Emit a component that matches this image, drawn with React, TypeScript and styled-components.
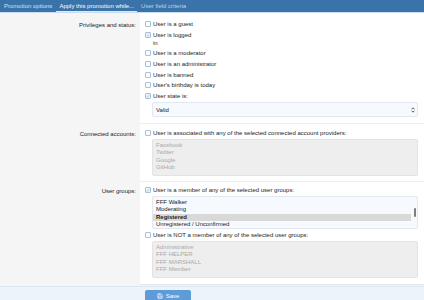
import styled, { createGlobalStyle } from 'styled-components';
import { Save } from 'lucide-react';

const GlobalStyle = createGlobalStyle`
  html, body {
    margin: 0;
    padding: 0;
    background: #f5f5f5;
    font-family: "Liberation Sans", Arial, sans-serif;
    font-size: 6px;
    color: #1c1c1c;
  }
`;

const privileges: { text: React.ReactNode; checked?: boolean }[] = [
  { text: 'User is a guest' },
  { text: <>User is logged<br />in</>, checked: true },
  { text: 'User is a moderator' },
  { text: 'User is an administrator' },
  { text: 'User is banned' },
  { text: "User's birthday is today" },
  { text: 'User state is:', checked: true },
];

const providers = ['Facebook', 'Twitter', 'Google', 'GitHub'];
const memberGroups = ['FFF Walker', 'Moderating', 'Registered', 'Unregistered / Unconfirmed'];
const notMemberGroups = ['Administrative', 'FFF HELPER', 'FFF MARSHALL', 'FFF Member'];

export default function App() {
  return (
    <Page>
      <GlobalStyle />
      <Tabs>
        <Tab>Promotion options</Tab>
        <Tab active>Apply this promotion while...</Tab>
        <Tab dim>User field criteria</Tab>
      </Tabs>

      <FormRow>
        <Label top={8}>Privileges and status:</Label>
        <Field top={7} bottom={6}>
          <CheckList>
            {privileges.map((p, i) => (
              <CheckItem key={i}>
                <Box checked={p.checked}>{p.checked ? '✓' : ''}</Box>
                <span>{p.text}</span>
              </CheckItem>
            ))}
          </CheckList>
          <Select>
            <span>Valid</span>
            <svg width="4" height="6" viewBox="0 0 4 6">
              <path d="M0.5 2.3 L2 0.8 L3.5 2.3 M0.5 3.7 L2 5.2 L3.5 3.7" fill="none" stroke="#333" strokeWidth="0.8" />
            </svg>
          </Select>
        </Field>
      </FormRow>

      <FormRow>
        <Label top={6}>Connected accounts:</Label>
        <Field top={5} bottom={5}>
          <CheckItem>
            <Box />
            <span>User is associated with any of the selected connected account providers:</span>
          </CheckItem>
          <ListBox disabled>
            {providers.map((p) => (
              <ListItem key={p}>{p}</ListItem>
            ))}
          </ListBox>
        </Field>
      </FormRow>

      <FormRow>
        <Label top={5}>User groups:</Label>
        <Field top={4} bottom={6} last>
          <CheckItem>
            <Box checked>✓</Box>
            <span>User is a member of any of the selected user groups:</span>
          </CheckItem>
          <ListBox>
            {memberGroups.map((g) => (
              <ListItem key={g} selected={g === 'Registered'}>
                {g}
              </ListItem>
            ))}
            <Scrollbar />
          </ListBox>
          <CheckItem>
            <Box />
            <span>User is NOT a member of any of the selected user groups:</span>
          </CheckItem>
          <ListBox disabled>
            {notMemberGroups.map((g) => (
              <ListItem key={g}>{g}</ListItem>
            ))}
          </ListBox>
        </Field>
      </FormRow>

      <Footer>
        <SaveButton>
          <Save size={6} strokeWidth={2.5} />
          Save
        </SaveButton>
      </Footer>
    </Page>
  );
}

const Page = styled.div`
  width: 424px;
  height: 300px;
  overflow: hidden;
  background: #f5f5f5;
`;

const Tabs = styled.div`
  display: flex;
  height: 12px;
  background: #3a72aa;
  border-bottom: 1px solid #c9dbee;
  padding-left: 1px;
`;

const Tab = styled.div<{ active?: boolean; dim?: boolean }>`
  display: flex;
  align-items: center;
  padding: 0 3px;
  margin-right: 1px;
  color: ${(p) => (p.active ? '#ffffff' : p.dim ? '#bcd3ec' : '#d3e2f2')};
  box-shadow: ${(p) => (p.active ? 'inset 0 -1px 0 #dde9f5' : 'none')};
  white-space: nowrap;
  line-height: 12px;
`;

const FormRow = styled.div`
  display: grid;
  grid-template-columns: 140px 1fr;
`;

const Label = styled.div<{ top: number }>`
  text-align: right;
  padding: ${(p) => p.top}px 4px 0 0;
  line-height: 8px;
  background: #f5f5f5;
`;

const Field = styled.div<{ top: number; bottom: number; last?: boolean }>`
  display: flex;
  flex-direction: column;
  gap: 2px;
  background: #ffffff;
  padding: ${(p) => p.top}px 6px ${(p) => p.bottom}px 5px;
  border-bottom: 1px solid ${(p) => (p.last ? '#e2e6ea' : '#efefef')};
`;

const CheckList = styled.div`
  display: flex;
  flex-direction: column;
  gap: 2.7px;
`;

const CheckItem = styled.label`
  display: flex;
  align-items: flex-start;
  gap: 2px;
  line-height: 8px;
  white-space: nowrap;
`;

const Box = styled.span<{ checked?: boolean }>`
  box-sizing: border-box;
  flex: none;
  width: 6px;
  height: 6px;
  margin-top: 1px;
  border: 1px solid #a7bfd8;
  border-radius: 1px;
  background: ${(p) => (p.checked ? '#eef4fb' : '#fafcfe')};
  color: #8fb1d6;
  font-size: 5px;
  line-height: 4px;
  text-align: center;
`;

const Select = styled.div`
  box-sizing: border-box;
  display: flex;
  align-items: center;
  justify-content: space-between;
  height: 15px;
  margin-left: 7px;
  padding: 0 2px 0 3px;
  background: #f6f9fd;
  border: 1px solid #e1e8f0;
  border-radius: 2px;
`;

const ListBox = styled.div<{ disabled?: boolean }>`
  position: relative;
  box-sizing: border-box;
  height: ${(p) => (p.disabled ? 37 : 33)}px;
  margin-left: 7px;
  padding: 2px 6px 2px 0;
  overflow: hidden;
  background: ${(p) => (p.disabled ? '#eeeeee' : '#f6f9fd')};
  border: 1px solid ${(p) => (p.disabled ? '#e3e3e3' : '#e1e8f0')};
  border-radius: 2px;
  color: ${(p) => (p.disabled ? '#a9a9a9' : '#1c1c1c')};
`;

const ListItem = styled.div<{ selected?: boolean }>`
  padding-left: 3px;
  line-height: 7.2px;
  white-space: nowrap;
  background: ${(p) => (p.selected ? '#d9d9d9' : 'transparent')};
  font-weight: ${(p) => (p.selected ? 700 : 400)};
`;

const Scrollbar = styled.span`
  position: absolute;
  right: 1px;
  top: 11px;
  width: 2px;
  height: 9px;
  background: #7f7f7f;
  border-radius: 1px;
`;

const Footer = styled.div`
  margin-top: 1px;
  padding: 3px 0 0 145px;
  height: 16px;
  background: #edf3fa;
  border-top: 1px solid #dde5ee;
`;

const SaveButton = styled.button`
  display: flex;
  align-items: center;
  justify-content: center;
  gap: 3px;
  width: 46px;
  height: 12px;
  border: none;
  border-radius: 2px;
  background: #5d9cd9;
  color: #ffffff;
  font-family: "Liberation Sans", Arial, sans-serif;
  font-size: 6px;
  padding: 0;
`;
